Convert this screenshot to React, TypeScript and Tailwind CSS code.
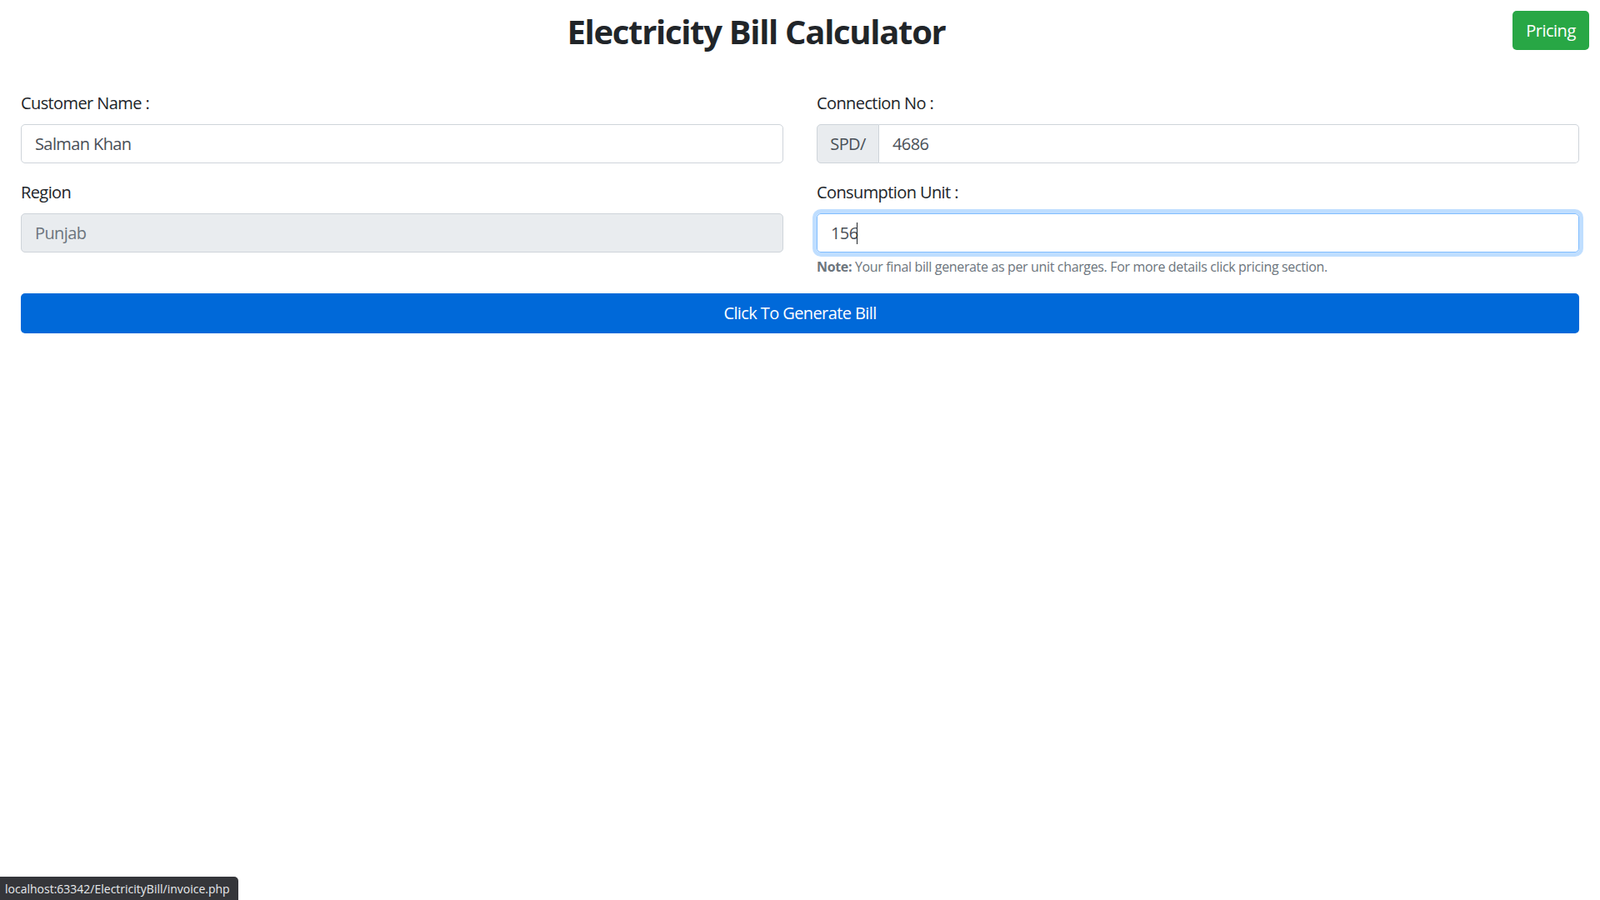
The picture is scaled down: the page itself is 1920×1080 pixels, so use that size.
import React from "react";

export default function App() {
  const font = { fontFamily: '"Open Sans", "Noto Sans", sans-serif' };
  return (
    <div className="min-h-[1080px] bg-white text-[#212529] relative" style={font}>
      <div className="flex items-start">
        <h1 className="flex-1 text-center text-[40px] font-bold leading-[48px] mt-[14px] tracking-[-1.3px]">
          Electricity Bill Calculator
        </h1>
        <button className="mt-[13px] mr-[13px] h-[47px] w-[92px] rounded-[5px] bg-[#28a745] text-white text-[20px] tracking-[-0.5px]">
          Pricing
        </button>
      </div>

      <div className="px-[25px] mt-[47px] tracking-[-0.6px]">
        <div className="grid grid-cols-2 gap-x-[40px]">
          <div>
            <label className="block text-[20px] leading-[30px] mb-[10px]">Customer Name :</label>
            <input
              readOnly
              value="Salman Khan"
              className="block w-full h-[47px] px-[16px] border border-[#ced4da] rounded-[5px] text-[20px] text-[#495057] outline-none tracking-[-0.6px]"
              style={font}
            />
          </div>
          <div>
            <label className="block text-[20px] leading-[30px] mb-[10px]">Connection No :</label>
            <div className="flex h-[47px]">
              <div className="w-[75px] flex items-center justify-center bg-[#e9ecef] border border-[#ced4da] rounded-l-[5px] text-[20px] text-[#495057]">
                SPD/
              </div>
              <input
                readOnly
                value="4686"
                className="flex-1 min-w-0 h-full px-[16px] border border-l-0 border-[#ced4da] rounded-r-[5px] text-[20px] text-[#495057] outline-none tracking-[-0.6px]"
                style={font}
              />
            </div>
          </div>

          <div className="mt-[20px]">
            <label className="block text-[20px] leading-[30px] mb-[10px]">Region</label>
            <input
              readOnly
              value="Punjab"
              className="block w-full h-[47px] px-[16px] border border-[#ced4da] rounded-[5px] bg-[#e9ecef] text-[20px] text-[#6c757d] outline-none tracking-[-0.6px]"
              style={font}
            />
          </div>
          <div className="mt-[20px]">
            <label className="block text-[20px] leading-[30px] mb-[10px]">Consumption Unit :</label>
            <div className="relative">
              <input
                readOnly
                value="156"
                className="block w-full h-[47px] px-[16px] border border-[#80bdff] rounded-[5px] text-[20px] text-[#495057] outline-none shadow-[0_0_0_5px_rgba(0,123,255,0.25)] tracking-[-0.6px]"
                style={font}
              />
              <span className="absolute left-[48px] top-[11px] w-[1px] h-[26px] bg-[#212529]" />
            </div>
            <p className="mt-[5px] text-[16px] leading-[24px] text-[#6c757d] tracking-[-0.35px]">
              <b>Note:</b> Your final bill generate as per unit charges. For more details click pricing section.
            </p>
          </div>
        </div>

        <button className="mt-[20px] w-full h-[48px] rounded-[5px] bg-[#0069d9] text-white text-[20px]">
          Click To Generate Bill
        </button>
      </div>

      <div className="absolute left-0 bottom-0 h-[28px] pl-[6px] pr-[10px] flex items-center bg-[#35363a] text-[#e8eaed] text-[14px] rounded-tr-[5px]">
        localhost:63342/ElectricityBill/invoice.php
      </div>
    </div>
  );
}
